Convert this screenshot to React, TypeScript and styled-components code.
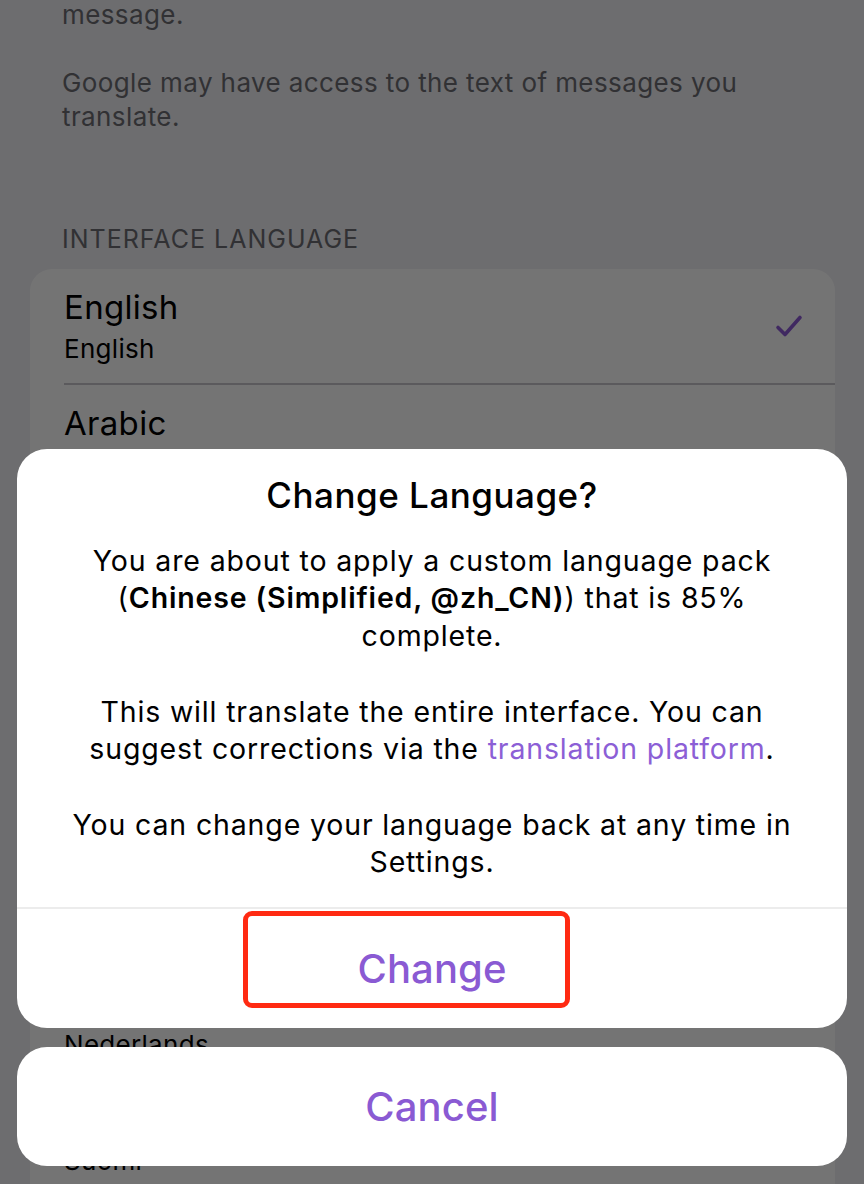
import React from "react";
import styled, { createGlobalStyle } from "styled-components";

const Global = createGlobalStyle`
  html, body { margin: 0; padding: 0; height: 100%; overflow: hidden; }
  body { font-family: Inter, "Noto Sans", sans-serif; -webkit-font-smoothing: antialiased; }
  #root { height: 100%; }
`;

const Screen = styled.div`
  position: relative;
  width: 864px;
  height: 1184px;
  overflow: hidden;
  background: #efeff4;
`;

const Content = styled.div`
  display: flex;
  flex-direction: column;
  margin-top: -36px;
`;

const Footer = styled.p`
  margin: 0;
  padding: 0 40px 0 62px;
  font-size: 26px;
  line-height: 34px;
  letter-spacing: 0.4px;
  color: #6d6d72;
  white-space: pre-line;
`;

const SectionHeader = styled.div`
  margin: 90px 0 0;
  padding: 0 62px;
  font-size: 25px;
  line-height: 30px;
  letter-spacing: 1px;
  color: #6d6d72;
  text-transform: uppercase;
`;

const Card = styled.div`
  margin: 15px 29px 0 30px;
  background: #ffffff;
  border-radius: 22px;
  overflow: hidden;
  display: flex;
  flex-direction: column;
`;

const Row = styled.div<{ $last?: boolean }>`
  height: 116px;
  display: flex;
  align-items: center;
  margin-left: 34px;
  padding-right: 32px;
  box-sizing: border-box;
  border-bottom: ${(p) => (p.$last ? "none" : "2px solid #c8c7cc")};
`;

const RowText = styled.div`
  flex: 1;
  display: flex;
  flex-direction: column;
`;

const RowTitle = styled.div`
  font-size: 33px;
  line-height: 40px;
  letter-spacing: 0.3px;
  color: #000;
`;

const RowSub = styled.div`
  font-size: 26px;
  line-height: 32px;
  margin-top: 6px;
  letter-spacing: 0.3px;
  color: #000;
`;

const Overlay = styled.div`
  position: absolute;
  inset: 0;
  background: rgba(0, 0, 0, 0.545);
  display: flex;
  flex-direction: column;
  justify-content: flex-end;
  padding: 0 17px 18px;
  gap: 19px;
`;

const Alert = styled.div`
  background: #fff;
  border-radius: 30px;
  display: flex;
  flex-direction: column;
`;

const AlertBody = styled.div`
  padding: 25px 38px 26px;
  border-bottom: 2px solid #ececec;
  text-align: center;
`;

const AlertTitle = styled.div`
  font-size: 35px;
  line-height: 42px;
  font-weight: 500;
  color: #000;
  letter-spacing: 0.5px;
`;

const AlertText = styled.p`
  margin: 26px 0 0;
  font-size: 28.5px;
  line-height: 37.7px;
  color: #000;
  letter-spacing: 0.85px;

  & + & {
    margin-top: 37.7px;
  }

  b {
    font-weight: 600;
  }
`;

const Link = styled.span`
  color: #8c5fd6;
`;

const ActionButton = styled.div`
  position: relative;
  height: 119px;
  display: flex;
  align-items: center;
  justify-content: center;
  font-size: 40px;
  font-weight: 500;
  color: #8a5ad3;
  letter-spacing: 0.1px;
`;

const Highlight = styled.div`
  position: absolute;
  left: 226px;
  top: 2px;
  width: 327px;
  height: 97px;
  box-sizing: border-box;
  border: 5px solid #ff2a12;
  border-radius: 9px;
`;

const CancelCard = styled.div`
  background: #fff;
  border-radius: 30px;
`;

const Check = () => (
  <svg width="28" height="24" viewBox="0 0 28 24" fill="none">
    <path d="M3 13.5 L10 20.5 L25 3.5" stroke="#8e5bd6" strokeWidth="3.6" strokeLinecap="round" strokeLinejoin="round" />
  </svg>
);

const languages: [string, string][] = [
  ["English", "English"],
  ["Arabic", "العربية"],
  ["Belarusian", "Беларуская"],
  ["Catalan", "Català"],
  ["Croatian", "Hrvatski"],
  ["Czech", "Čeština"],
  ["Dutch", "Nederlands"],
  ["Finnish", "Suomi"],
  ["French", "Français"],
];

export default function App() {
  return (
    <>
      <Global />
      <Screen>
        <Content>
          <Footer>{"The 'Translate' button will appear when you tap on a\nmessage.\n\nGoogle may have access to the text of messages you\ntranslate."}</Footer>
          <SectionHeader>Interface Language</SectionHeader>
          <Card>
            {languages.map(([t, s], i) => (
              <Row key={t} $last={i === languages.length - 1}>
                <RowText>
                  <RowTitle>{t}</RowTitle>
                  <RowSub>{s}</RowSub>
                </RowText>
                {i === 0 && <Check />}
              </Row>
            ))}
          </Card>
        </Content>
        <Overlay>
          <Alert>
            <AlertBody>
              <AlertTitle>Change Language?</AlertTitle>
              <AlertText>
                You are about to apply a custom language pack (<b>Chinese (Simplified, @zh_CN)</b>) that is 85% complete.
              </AlertText>
              <AlertText>
                This will translate the entire interface. You can suggest corrections via the <Link>translation platform</Link>.
              </AlertText>
              <AlertText>You can change your language back at any time in Settings.</AlertText>
            </AlertBody>
            <ActionButton>
              Change
              <Highlight />
            </ActionButton>
          </Alert>
          <CancelCard>
            <ActionButton>Cancel</ActionButton>
          </CancelCard>
        </Overlay>
      </Screen>
    </>
  );
}
